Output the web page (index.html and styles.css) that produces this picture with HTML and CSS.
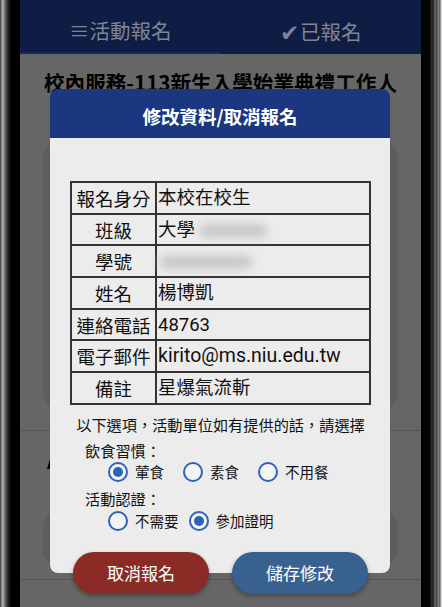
FILE: index.html
```html
<!DOCTYPE html>
<html lang="zh-Hant">
<head>
<meta charset="utf-8">
<link rel="stylesheet" href="styles.css">
</head>
<body>
<div class="phone">
  <div class="bezel-left"></div>
  <div class="screen">
    <div class="tabs">
      <div class="tab active">≡活動報名</div>
      <div class="tab"><span class="check">✔</span>已報名</div>
    </div>
    <div class="page">
      <div class="page-title">校內服務-113新生入學始業典禮工作人員</div>
      <div class="bg-card big"></div>
      <div class="rule"></div>
      <div class="page-title second">A活動時間</div>
      <div class="bg-card small"></div>
      <div class="rule"></div>
    </div>

    <div class="modal">
      <div class="modal-head">修改資料/取消報名</div>
      <div class="modal-body">
        <table class="info">
          <tr><th>報名身分</th><td>本校在校生</td></tr>
          <tr><th>班級</th><td>大學<span class="blur b1"></span></td></tr>
          <tr><th>學號</th><td><span class="blur b2"></span></td></tr>
          <tr><th>姓名</th><td>楊博凱</td></tr>
          <tr><th>連絡電話</th><td>48763</td></tr>
          <tr><th>電子郵件</th><td>kirito@ms.niu.edu.tw</td></tr>
          <tr><th>備註</th><td>星爆氣流斬</td></tr>
        </table>
        <p class="note">以下選項，活動單位如有提供的話，請選擇</p>
        <div class="group-label">飲食習慣：</div>
        <div class="radios wide">
          <label class="opt"><span class="radio on"></span>葷食</label>
          <label class="opt"><span class="radio"></span>素食</label>
          <label class="opt"><span class="radio"></span>不用餐</label>
        </div>
        <div class="group-label l2">活動認證：</div>
        <div class="radios narrow">
          <label class="opt"><span class="radio"></span>不需要</label>
          <label class="opt"><span class="radio on"></span>參加證明</label>
        </div>
      </div>
      <div class="actions">
        <button class="btn cancel">取消報名</button>
        <button class="btn save">儲存修改</button>
      </div>
    </div>
  </div>
  <div class="bezel-right"></div>
</div>
</body>
</html>
```

FILE: styles.css
```css
* { box-sizing: border-box; }
html, body { margin: 0; padding: 0; }
body {
  width: 442px;
  height: 607px;
  overflow: hidden;
  background: #000;
  font-family: Roboto, "Noto Sans CJK TC", sans-serif;
}
.phone {
  display: flex;
  width: 442px;
  height: 607px;
}
.bezel-left {
  width: 20px;
  flex: none;
  background: linear-gradient(to right, #3a3a3a 0, #9c9c9c 2px, #b0b0b0 3px, #6a6a6a 5px, #3a3a3a 7px, #1a1a1a 9px, #000 11px, #000 20px);
}
.bezel-right {
  width: 21px;
  flex: none;
  background: linear-gradient(to right, #000 0, #050505 9px, #2e2e2e 10px, #1e1e1e 12px, #6a6a6a 14px, #3c3c3c 16px, #8a8a8a 17px, #5a5a5a 19px, #d8d8d8 20px);
}
.screen {
  position: relative;
  width: 401px;
  flex: none;
  background: #666;
  overflow: hidden;
}
.tabs {
  display: flex;
  height: 54px;
  background: #0f1c44;
}
.tab {
  flex: 1;
  display: flex;
  align-items: center;
  justify-content: center;
  padding-top: 8px;
  color: #7f8494;
  font-size: 20.5px;
  font-family: "Noto Sans CJK TC", sans-serif;
}
.tab.active { border-bottom: 2px solid #17285a; }
.check { font-size: 23px; margin-right: 1px; }
.page {
  display: flex;
  flex-direction: column;
}
.page-title {
  padding: 15px 20px 0 20px;
  font-size: 20.6px;
  line-height: 26px;
  font-weight: bold;
  color: #000;
  text-align: center;
  font-family: "Noto Sans CJK TC", sans-serif;
}
.page-title.second { padding-top: 16px; padding-left: 27px; white-space: nowrap; text-align: left; }
.bg-card {
  margin: 0 23px 0 23px;
  background: #5d5d5d;
  border-radius: 18px;
}
.bg-card.big { height: 270px; margin-top: 19px; }
.bg-card.small { height: 57px; margin-top: 37px; }
.rule {
  height: 1px;
  background: #555;
  margin-top: 20px;
}
.bg-card.small + .rule { margin-top: 12px; }

.modal {
  position: absolute;
  left: 30px;
  top: 89px;
  width: 340px;
  display: flex;
  flex-direction: column;
}
.modal-head {
  height: 49px;
  background: #1a377f;
  border-radius: 8px 8px 0 0;
  color: #fff;
  font-weight: bold;
  font-size: 18.5px;
  display: flex;
  align-items: center;
  justify-content: center;
  padding-top: 5px;
  font-family: "Noto Sans CJK TC", sans-serif;
}
.modal-body {
  background: #ececec;
  border-radius: 0 0 8px 8px;
  padding: 43px 19px 42px 20px;
}
.info {
  width: 301px;
  border-collapse: separate;
  border-spacing: 0;
  border: 1px solid #333;
  font-size: 18.5px;
  color: #111;
}
.info th, .info td {
  border: 1px solid #333;
  height: 31.7px;
  font-weight: normal;
  white-space: nowrap;
  line-height: 22px;
}
.info th { width: 85px; padding: 0; text-align: center; font-family: "Noto Sans CJK TC", sans-serif; }
.info td { text-align: left; padding: 0 2px 0 1px; }
.info tr:nth-child(6) td { font-size: 19.5px; }
.blur {
  display: inline-block;
  vertical-align: middle;
  height: 14px;
  background: #c9c9c9;
  filter: blur(4px);
  border-radius: 6px;
}
.blur.b1 { width: 68px; margin-left: 4px; }
.blur.b2 { width: 92px; margin-left: 2px; }
.note {
  margin: 9px 0 0 0;
  text-align: center;
  font-size: 15.2px;
  line-height: 20px;
  color: #111;
  font-family: "Noto Sans CJK TC", sans-serif;
}
.group-label {
  margin: 7px 0 0 15px;
  font-size: 15.2px;
  line-height: 18px;
  color: #111;
  font-family: "Noto Sans CJK TC", sans-serif;
}
.group-label.l2 { margin-top: 7px; }
.radios {
  display: flex;
  margin: 3px 0 0 38px;
  height: 20px;
  align-items: center;
}
.radios.wide { gap: 19px; }
.radios.narrow { gap: 10px; margin-top: 4px; }
.opt {
  display: flex;
  align-items: center;
  gap: 7px;
  font-size: 14.5px;
  line-height: 18px;
  color: #111;
  font-family: "Noto Sans CJK TC", sans-serif;
}
.radio {
  width: 20px;
  height: 20px;
  border: 2px solid #2c62b8;
  border-radius: 50%;
  display: flex;
  align-items: center;
  justify-content: center;
  background: #f4f4f4;
}
.radio.on::after {
  content: "";
  width: 10px;
  height: 10px;
  border-radius: 50%;
  background: #2c62b8;
}
.actions {
  display: flex;
  justify-content: center;
  gap: 23px;
  margin-top: -21px;
  padding-left: 1px;
}
.btn {
  width: 136px;
  height: 42px;
  border: none;
  border-radius: 21px;
  color: #fff;
  font-size: 17px;
  font-family: "Noto Sans CJK TC", sans-serif;
  box-shadow: 0 2px 4px rgba(0,0,0,0.35);
  padding: 0;
}
.btn.cancel { background: #8a2b25; }
.btn.save { background: #39618f; }
```
